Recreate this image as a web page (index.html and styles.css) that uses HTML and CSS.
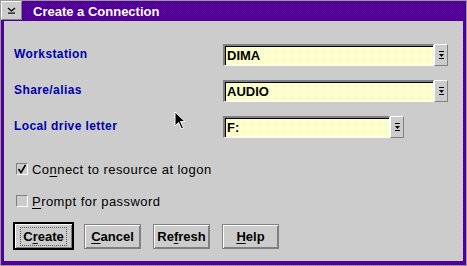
FILE: index.html
```html
<!DOCTYPE html>
<html>
<head>
<meta charset="utf-8">
<link rel="stylesheet" href="styles.css">
</head>
<body>
<div class="window">
  <div class="titlebar">
    <div class="sysmenu">
      <svg width="9" height="7" viewBox="0 0 9 7"><path d="M1 1 L4.5 4 L8 1" fill="none" stroke="#000" stroke-width="1.3"/><rect x="1" y="5.5" width="7" height="1.2" fill="#000"/></svg>
    </div>
    <div class="title">Create a Connection</div>
  </div>
  <div class="client">
    <div class="form">
      <div class="label">Workstation</div>
      <div class="combo wide"><div class="field">DIMA</div><div class="drop"><svg width="5" height="9" viewBox="0 0 5 9"><rect x="0" y="0" width="5" height="1" fill="#000"/><path d="M0 3 L5 3 L2.5 6 Z" fill="#000"/><rect x="0" y="7" width="5" height="1" fill="#000"/></svg></div></div>
      <div class="label">Share/alias</div>
      <div class="combo wide"><div class="field">AUDIO</div><div class="drop"><svg width="5" height="9" viewBox="0 0 5 9"><rect x="0" y="0" width="5" height="1" fill="#000"/><path d="M0 3 L5 3 L2.5 6 Z" fill="#000"/><rect x="0" y="7" width="5" height="1" fill="#000"/></svg></div></div>
      <div class="label">Local drive letter</div>
      <div class="combo narrow"><div class="field">F:</div><div class="drop"><svg width="5" height="9" viewBox="0 0 5 9"><rect x="0" y="0" width="5" height="1" fill="#000"/><path d="M0 3 L5 3 L2.5 6 Z" fill="#000"/><rect x="0" y="7" width="5" height="1" fill="#000"/></svg></div></div>
    </div>
    <div class="checks">
      <div class="check"><div class="box"><svg width="10" height="10" viewBox="0 0 10 10"><path d="M1.5 5 L4 8.5 L8.5 1" fill="none" stroke="#000" stroke-width="1.6"/></svg></div><span>Co<u>n</u>nect to resource at logon</span></div>
      <div class="check"><div class="box"></div><span><u>P</u>rompt for password</span></div>
    </div>
    <div class="buttons">
      <div class="btn default"><span class="focus">C<u>r</u>eate</span></div>
      <div class="btn"><span><u>C</u>ancel</span></div>
      <div class="btn"><span>Re<u>f</u>resh</span></div>
      <div class="btn"><span><u>H</u>elp</span></div>
    </div>
  </div>
  <svg class="cursor" width="14" height="20" viewBox="0 0 14 20"><path d="M1 1 L1 15 L4.5 11.5 L7.5 18 L9.5 17 L6.5 10.5 L11 10.5 Z" fill="#000" stroke="#fff" stroke-width="1"/></svg>
</div>
</body>
</html>
```
FILE: styles.css
```css
html, body {
  margin: 0;
  padding: 0;
  background: #cccccc;
}
.window {
  position: relative;
  width: 467px;
  height: 266px;
  box-sizing: border-box;
  border: 1px solid #9a9a9a;
  background: repeating-conic-gradient(#3e0078 0 25%, #6400b4 0 50%) 0 0 / 2px 2px;
  padding: 0 3px 4px 3px;
  display: flex;
  flex-direction: column;
  font-family: "Liberation Sans", Arial, sans-serif;
  font-weight: bold;
  font-size: 12px;
}
.titlebar {
  height: 20px;
  display: flex;
  align-items: center;
  margin-left: -3px;
}
.sysmenu {
  width: 21px;
  height: 19px;
  box-sizing: border-box;
  background: #cccccc;
  border-top: 1px solid #ffffff;
  border-left: 1px solid #ffffff;
  border-right: 1px solid #808080;
  border-bottom: 1px solid #808080;
  display: flex;
  align-items: center;
  justify-content: center;
  align-self: flex-start;
}
.title {
  color: #ffffff;
  font-size: 13px;
  margin-left: 11px;
}
.client {
  flex: 1;
  background: #cccccc;
  padding: 23px 0 0 10px;
  display: flex;
  flex-direction: column;
}
.form {
  display: grid;
  grid-template-columns: 209px auto;
  grid-auto-rows: 22px;
  row-gap: 14px;
  align-items: center;
}
.label {
  color: #0000aa;
  font-size: 12px;
  letter-spacing: 0.4px;
  margin-top: -3px;
}
.combo {
  display: flex;
  height: 22px;
}
.combo.wide { width: 225px; }
.combo.narrow { width: 181px; }
.field {
  flex: 1;
  box-sizing: border-box;
  background: repeating-conic-gradient(#ffffff 0 25%, #ffff99 0 50%) 0 0 / 2px 2px;
  border-top: 2px solid #808080;
  border-left: 2px solid #808080;
  border-right: 1px solid #ffffff;
  border-bottom: 1px solid #ffffff;
  box-shadow: inset 1px 1px 0 #000;
  color: #000;
  font-size: 13px;
  padding: 2px 0 0 2px;
  line-height: 16px;
}
.drop {
  width: 14px;
  box-sizing: border-box;
  background: #cccccc;
  border-top: 1px solid #ffffff;
  border-left: 1px solid #ffffff;
  border-right: 1px solid #808080;
  border-bottom: 1px solid #808080;
  display: flex;
  align-items: center;
  justify-content: center;
}
.checks {
  margin-top: 25px;
  display: flex;
  flex-direction: column;
  gap: 20px;
}
.check {
  display: flex;
  align-items: center;
  height: 12px;
  color: #000;
  font-size: 13px;
  font-weight: normal;
  letter-spacing: 0.45px;
  margin-left: 2px;
}
.box {
  width: 12px;
  height: 12px;
  box-sizing: border-box;
  border-top: 1px solid #808080;
  border-left: 1px solid #808080;
  border-right: 1px solid #ffffff;
  border-bottom: 1px solid #ffffff;
  background: #cccccc;
  margin-right: 4px;
  display: flex;
  align-items: center;
  justify-content: center;
}
.buttons {
  margin-top: 15px;
  display: flex;
  gap: 12px;
  align-items: center;
  margin-left: -1px;
}
.btn {
  width: 57px;
  height: 25px;
  box-sizing: border-box;
  border: 1px solid #808080;
  box-shadow: inset 1px 1px 0 #ffffff, inset -1px -1px 0 #808080;
  display: flex;
  align-items: center;
  justify-content: center;
  color: #000;
  font-size: 13px;
}
.btn.default {
  width: 61px;
  height: 28px;
  border: 2px solid #000;
  margin-right: -2px;
}
.focus {
  outline: 1px dotted #555;
  outline-offset: 1px;
  padding: 0 1px;
}
u { text-decoration-thickness: 1px; text-underline-offset: 2px; }
.cursor {
  position: absolute;
  left: 173px;
  top: 110px;
}
```
